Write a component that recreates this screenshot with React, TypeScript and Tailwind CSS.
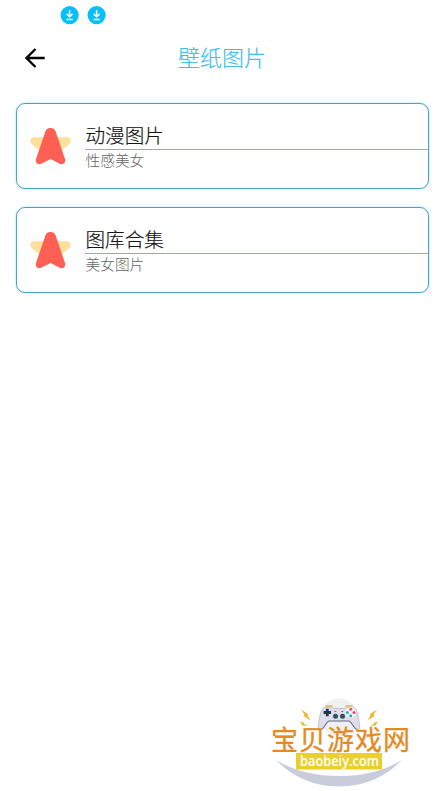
type Category = {
  title: string;
  subtitle: string;
};

const categories: Category[] = [
  { title: "动漫图片", subtitle: "性感美女" },
  { title: "图库合集", subtitle: "美女图片" },
];

function DownloadBadge() {
  return (
    <svg width="19" height="19" viewBox="0 0 19 19" fill="none">
      <circle cx="9.6" cy="9.1" r="9.1" fill="#06befa" />
      <path
        d="M9.6 4v6.5M6.7 7.9l2.900 2.800 2.900-2.800M6.500 13.400h6.200"
        stroke="#fff"
        strokeWidth="1.5"
      />
    </svg>
  );
}

function BackArrow() {
  return (
    <svg width="20" height="20" viewBox="0 0 20 20" fill="none">
      <path d="M19.7 10H1.5M10.5 1L1.5 10l9 9" stroke="#000" strokeWidth="2.3" />
    </svg>
  );
}

function StarIcon() {
  return (
    <svg width="41" height="38" viewBox="0 0 41 38" className="mt-0.5 shrink-0">
      <path
        d="M4 9.3H37C41 9.3 42 13.8 39 16.2L30 23.5H11L2 16.2C-1 13.8 0 9.3 4 9.3Z"
        fill="#ffdf9c"
      />
      <path
        d="M20.5 0C23.3 0 25 1.6 25.8 4L35 31C36.2 34.5 33 37.3 29.8 35.7L20.5 30.9L11.2 35.7C8 37.3 4.8 34.5 6 31L15.2 4C16 1.6 17.7 0 20.5 0Z"
        fill="#ff6053"
      />
    </svg>
  );
}

function CategoryCard({ title, subtitle }: Category) {
  return (
    <li className="flex h-[86px] items-center rounded-[9px] border border-[#4da0c5] bg-white pl-[13px] shadow-[0_0_2px_1px_#d3f1fb]">
      <StarIcon />
      <div className="ml-3.5 flex-1 pb-px">
        <h2 className="h-[28px] border-b border-[#7fb3cf] pl-[0.5px] text-[19.6px] leading-[25px] font-light text-[#151515] [-webkit-text-stroke:0.2px_#151515]">
          {title}
        </h2>
        <p className="h-[19px] pl-[0.5px] text-[14.7px] leading-[20px] font-light text-[#666]">
          {subtitle}
        </p>
      </div>
    </li>
  );
}

function Gamepad() {
  return (
    <g>
      <circle cx="69" cy="26.5" r="19" fill="#f0f0f1" />
      <path d="M55.500 15h7M75.500 15h7" stroke="#e6b341" strokeWidth="1.5" />
      <path
        d="M51.500 19C53.500 15.500 60.500 15.500 64 17.500H74C77.500 15.500 84.500 15.500 86.500 19C88 23 89 30 89.700 35C90 37.500 88.500 39 86.800 38.500C83.500 37.500 82 31 79 30H59C56 31 54.500 37.500 51.200 38.500C49.500 39 48 37.500 48.300 35C49 30 50 23 51.500 19Z"
        fill="#dedee9"
        stroke="#b2b2c4"
        strokeWidth="0.7"
      />
      <path
        d="M51.200 38.500C54.500 37.500 56 31 59 30H79C82 31 83.500 37.500 86.800 38.500"
        fill="none"
        stroke="#777792"
        strokeWidth="1.1"
      />
      <path d="M57.300 17.800v7.400M53.600 21.500h7.400" stroke="#20384a" strokeWidth="2.800" />
      <circle cx="80.700" cy="21.500" r="5.300" fill="#f7f7fb" />
      <circle cx="80.700" cy="18.200" r="1.500" fill="#e55069" />
      <circle cx="80.700" cy="24.800" r="1.500" fill="#28a9c1" />
      <circle cx="77.400" cy="21.500" r="1.500" fill="#28a9c1" />
      <circle cx="84" cy="21.500" r="1.500" fill="#e64862" />
      <circle cx="65.500" cy="25.300" r="2.500" fill="#2f5062" />
      <circle cx="72.500" cy="25.300" r="2.500" fill="#2f5062" />
      <path d="M64.300 20.500h2M71.300 20.500h2" stroke="#df4d71" />
    </g>
  );
}

function Watermark() {
  return (
    <svg
      width="150"
      height="100"
      viewBox="0 0 150 100"
      className="absolute top-[691px] left-[270px]"
    >
      <path d="M6 69Q32 85 69 85Q106 85 132 69Q106 95.500 69 95.500Q32 95.500 6 69Z" fill="#c9ccda" />
      <Gamepad />
      <g fill="#edb52e">
        <path d="M31 18.500l7 4.500-.5 1.500 3 5-7-4.500 1-1.500z" />
        <path d="M29.500 30.500l4.500 1.200.2 1.300 3.500 2-6-.8v-1.500z" />
        <path d="M107 18.500l-7 4.500.5 1.500-3 5 7-4.500-1-1.500z" />
        <path d="M108.500 30.500l-4.500 1.200-.2 1.300-3.500 2 6-.8v-1.500z" />
      </g>
      <text
        x="1"
        y="59"
        fontSize="27"
        letterSpacing="1"
        fill="#e38b22"
        stroke="#e38b22"
        strokeWidth="0.3"
      >
        宝贝游戏网
      </text>
      <rect x="26" y="62" width="86" height="16.5" fill="#ebcf2b" />
      <text
        x="30"
        y="75"
        fontSize="15"
        fontWeight="600"
        fill="#fff"
        textLength="79"
        lengthAdjust="spacingAndGlyphs"
        className="font-['Open_Sans',sans-serif]"
      >
        baobeiy.com
      </text>
    </svg>
  );
}

export default function App() {
  return (
    <div className="relative h-[791px] w-[445px] overflow-hidden bg-white font-['Noto_Sans_CJK_SC',sans-serif]">
      <div className="flex h-[30px] items-center gap-2 pl-[60px]">
        <DownloadBadge />
        <DownloadBadge />
      </div>
      <header className="grid h-14 grid-cols-[1fr_auto_1fr] items-center pl-[25px] pr-[26px]">
        <button type="button" aria-label="返回">
          <BackArrow />
        </button>
        <h1 className="pb-1 text-[22px] leading-none font-light text-[#3fc1ea] [-webkit-text-stroke:0.2px_#3fc1ea]">
          壁纸图片
        </h1>
      </header>
      <ul className="mt-[17px] flex flex-col gap-[18px] px-4">
        {categories.map((category) => (
          <CategoryCard key={category.title} {...category} />
        ))}
      </ul>
      <Watermark />
    </div>
  );
}
